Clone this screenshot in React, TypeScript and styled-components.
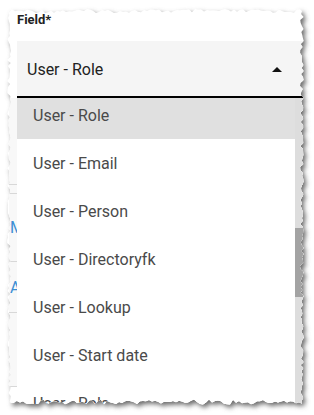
import React from 'react';
import styled, { createGlobalStyle } from 'styled-components';

const GlobalStyle = createGlobalStyle`
  html, body {
    margin: 0;
    padding: 0;
    background: #ffffff;
  }
  body {
    font-family: Roboto, "Liberation Sans", Arial, sans-serif;
  }
`;

// torn paper outline, deterministic jitter
const rand = (seed: number) => {
  const x = Math.sin(seed * 12.9898) * 43758.5453;
  return x - Math.floor(x);
};

const buildEdge = () => {
  const pts: [number, number][] = [];
  const L = 9, T = 11, R = 302, B = 402;
  let s = 1;
  for (let x = L; x < R; x += 3) pts.push([x, T + (rand(s++) - 0.5) * 4]);
  for (let y = T; y < B; y += 3) pts.push([R + (rand(s++) - 0.5) * 4, y]);
  for (let x = R; x > L; x -= 3) pts.push([x, B + (rand(s++) - 0.5) * 5]);
  for (let y = B; y > T; y -= 3) pts.push([L + (rand(s++) - 0.5) * 4, y]);
  return pts;
};

const EDGE = buildEdge();
const CLIP = `polygon(${EDGE.map(([x, y]) => `${x.toFixed(1)}px ${y.toFixed(1)}px`).join(', ')})`;
const SVG_POINTS = EDGE.map(([x, y]) => `${x.toFixed(1)},${y.toFixed(1)}`).join(' ');

const Page = styled.div`
  position: relative;
  width: 314px;
  height: 415px;
  overflow: hidden;
  background: #ffffff;
`;

const ShadowLayer = styled.svg`
  position: absolute;
  left: 0;
  top: 0;
`;

const Paper = styled.div`
  position: relative;
  width: 314px;
  height: 415px;
  box-sizing: border-box;
  padding: 12px 11px 0 17px;
  background: #ffffff;
  clip-path: ${CLIP};
`;

const Label = styled.div`
  font-size: 13px;
  font-weight: 700;
  color: #222222;
  line-height: 16px;
`;

const FieldWrap = styled.div`
  position: relative;
  margin-top: 13px;
`;

const Select = styled.div`
  height: 55px;
  background: #f5f5f5;
  border-bottom: 2px solid #000000;
  display: flex;
  align-items: center;
  justify-content: space-between;
  padding: 0 21px 0 10px;
  box-sizing: content-box;
`;

const SelectValue = styled.span`
  font-size: 16px;
  color: #222222;
  padding-top: 2px;
`;

const Caret = styled.span`
  width: 0;
  height: 0;
  border-left: 5px solid transparent;
  border-right: 5px solid transparent;
  border-bottom: 5px solid #111111;
  margin-top: 2px;
`;

// form content that the open menu covers
const Behind = styled.div`
  margin-left: -8px;
  background: #f8f8f8;
`;

const BehindRow = styled.div<{ $h: number }>`
  height: ${(p) => p.$h}px;
  border-bottom: 1px solid #d8d8d8;
  display: flex;
  align-items: center;
  padding-left: 1px;
  font-size: 16px;
  color: #3d8fd4;
`;

const Menu = styled.div`
  position: absolute;
  left: 0;
  right: 0;
  top: 57px;
  height: 330px;
  overflow: hidden;
  background: #ffffff;
  display: flex;
`;

const List = styled.div`
  flex: 1;
  margin-top: -7px;
`;

const Item = styled.div<{ $active?: boolean }>`
  height: 48px;
  display: flex;
  align-items: center;
  padding-left: 16px;
  font-size: 16px;
  color: #4a4a4a;
  background: ${(p) => (p.$active ? '#e0e0e0' : '#ffffff')};
`;

const Track = styled.div`
  width: 8px;
  background: #dddddd;
  position: relative;
`;

const Thumb = styled.div`
  position: absolute;
  left: 0;
  right: 0;
  top: 130px;
  height: 69px;
  background: #a3a3a3;
`;

const options = [
  'User - Role',
  'User - Email',
  'User - Person',
  'User - Directoryfk',
  'User - Lookup',
  'User - Start date',
  'User - Role',
];

const behindRows: { h: number; text?: string }[] = [
  { h: 86 },
  { h: 8 },
  { h: 67, text: 'M' },
  { h: 50, text: 'Ac' },
  { h: 73 },
];

export default function App() {
  return (
    <Page>
      <GlobalStyle />
      <ShadowLayer width={314} height={415}>
        <defs>
          <filter id="tornShadow" x="-10%" y="-10%" width="120%" height="120%">
            <feGaussianBlur stdDeviation="2.5" />
          </filter>
        </defs>
        <polygon
          points={SVG_POINTS}
          fill="#6b6b6b"
          transform="translate(2.5 3)"
          filter="url(#tornShadow)"
        />
      </ShadowLayer>
      <Paper>
        <Label>Field*</Label>
        <FieldWrap>
          <Select>
            <SelectValue>User - Role</SelectValue>
            <Caret />
          </Select>
          <Behind>
            {behindRows.map((r, i) => (
              <BehindRow key={i} $h={r.h}>
                {r.text}
              </BehindRow>
            ))}
          </Behind>
          <Menu>
            <List>
              {options.map((o, i) => (
                <Item key={i} $active={i === 0}>
                  {o}
                </Item>
              ))}
            </List>
            <Track>
              <Thumb />
            </Track>
          </Menu>
        </FieldWrap>
      </Paper>
    </Page>
  );
}
